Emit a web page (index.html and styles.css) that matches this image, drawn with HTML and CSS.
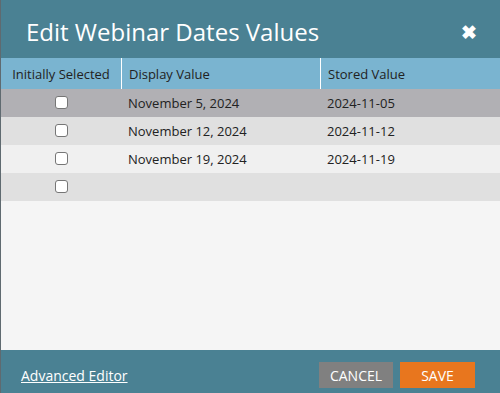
FILE: index.html
```html
<!DOCTYPE html>
<html lang="en">
<head>
  <meta charset="UTF-8" />
  <title>Edit Webinar Dates Values</title>
  <link rel="stylesheet" href="styles.css">
</head>
<body>
  <div class="dialog">
    <div class="dialog-header">
      <div class="dialog-title">Edit Webinar Dates Values</div>
      <span class="close-btn">&#10006;</span>
    </div>

    <div class="dialog-body">
      <div class="grid-row grid-head">
        <div class="cell col-sel">Initially Selected</div>
        <div class="cell col-disp">Display Value</div>
        <div class="cell col-stored">Stored Value</div>
      </div>
      <div class="grid-row row-selected">
        <div class="cell col-sel"><input type="checkbox"></div>
        <div class="cell col-disp">November 5, 2024</div>
        <div class="cell col-stored">2024-11-05</div>
      </div>
      <div class="grid-row row-even">
        <div class="cell col-sel"><input type="checkbox"></div>
        <div class="cell col-disp">November 12, 2024</div>
        <div class="cell col-stored">2024-11-12</div>
      </div>
      <div class="grid-row row-odd">
        <div class="cell col-sel"><input type="checkbox"></div>
        <div class="cell col-disp">November 19, 2024</div>
        <div class="cell col-stored">2024-11-19</div>
      </div>
      <div class="grid-row row-even">
        <div class="cell col-sel"><input type="checkbox"></div>
        <div class="cell col-disp"></div>
        <div class="cell col-stored"></div>
      </div>
    </div>

    <div class="dialog-footer">
      <a href="#" class="advanced-link">Advanced Editor</a>
      <div class="footer-buttons">
        <button class="btn btn-cancel">CANCEL</button>
        <button class="btn btn-save">SAVE</button>
      </div>
    </div>
  </div>
</body>
</html>
```

FILE: styles.css
```css
body {
  margin: 0;
  font-family: 'Open Sans', sans-serif;
  background-color: #f5f5f5;
}

.dialog {
  width: 500px;
  height: 393px;
  display: flex;
  flex-direction: column;
  border-left: 1px solid #5f6a70;
  box-sizing: border-box;
}

.dialog-header {
  height: 58px;
  background-color: #4a8193;
  display: flex;
  align-items: center;
  justify-content: space-between;
  padding: 0 23px 0 25px;
  flex-shrink: 0;
}

.dialog-title {
  color: #ffffff;
  font-size: 24px;
  font-weight: 400;
  margin-top: 4px;
}

.close-btn {
  color: #ffffff;
  font-size: 19px;
  font-weight: 700;
  margin-top: 5px;
}

.dialog-body {
  flex: 1;
  background-color: #f5f5f5;
}

.grid-row {
  display: flex;
  height: 28px;
  font-size: 13px;
  color: #222222;
}

.grid-head {
  height: 31px;
  background-color: #7ab4d0;
  color: #222222;
}

.grid-head .cell + .cell {
  border-left: 1px solid #ffffff;
}

.cell {
  display: flex;
  align-items: center;
  box-sizing: border-box;
}

.col-sel {
  width: 120px;
  justify-content: center;
}

.col-disp {
  width: 199px;
  padding-left: 7px;
}

.col-stored {
  flex: 1;
  padding-left: 7px;
}

.row-selected {
  background-color: #b1b0b4;
}

.row-even {
  background-color: #e0e0e0;
}

.row-odd {
  background-color: #f0f0f0;
}

.cell input[type="checkbox"] {
  appearance: none;
  width: 13px;
  height: 13px;
  margin: 0 0 1px 0;
  background: #ffffff;
  border: 1px solid #767676;
  border-radius: 3px;
  box-sizing: border-box;
}

.dialog-footer {
  height: 43px;
  background-color: #4a8193;
  display: flex;
  align-items: center;
  justify-content: space-between;
  padding: 0 25px 0 20px;
  flex-shrink: 0;
}

.advanced-link {
  color: #ffffff;
  font-size: 14px;
  text-decoration: underline;
  margin-top: 8px;
}

.footer-buttons {
  display: flex;
  gap: 7px;
  margin-top: 7px;
}

.btn {
  height: 26px;
  border: none;
  color: #ffffff;
  font-family: 'Open Sans', sans-serif;
  font-size: 14px;
  padding: 0;
  cursor: pointer;
}

.btn-cancel {
  width: 74px;
  background-color: #808080;
}

.btn-save {
  width: 75px;
  background-color: #e8761e;
}
```
